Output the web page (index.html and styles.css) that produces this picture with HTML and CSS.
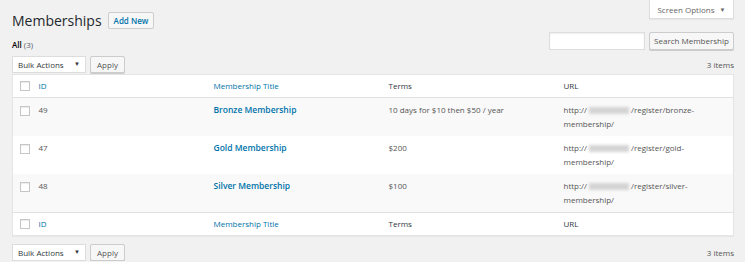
FILE: index.html
```html
<!DOCTYPE html>
<html lang="en">
<head>
  <meta charset="UTF-8">
  <title>Memberships</title>
  <meta name="viewport" content="width=device-width, initial-scale=1.0">
  <link rel="stylesheet" href="styles.css">
</head>
<body>

  <div class="wrap">
    <div class="page-head">
      <h1>Memberships</h1>
      <a class="page-title-action" href="#">Add New</a>
      <button class="screen-options" type="button">Screen Options <span class="arrow">&#9660;</span></button>
    </div>

    <div class="filter-row">
      <div class="subsubsub"><b>All</b> <span class="count">(3)</span></div>
      <form class="search-box">
        <input type="search" aria-label="Search Membership">
        <button type="submit" class="button">Search Membership</button>
      </form>
    </div>

    <div class="tablenav">
      <div class="bulk">
        <div class="select">Bulk Actions <span class="arrow">&#9660;</span></div>
        <button class="button" type="button">Apply</button>
      </div>
      <div class="num-items">3 items</div>
    </div>

    <table class="list-table">
      <colgroup>
        <col class="c-cb">
        <col class="c-col">
        <col class="c-col">
        <col class="c-col">
        <col>
      </colgroup>
      <thead>
        <tr>
          <th class="cb"><span class="check"></span></th>
          <th class="sortable">ID</th>
          <th class="sortable">Membership Title</th>
          <th>Terms</th>
          <th>URL</th>
        </tr>
      </thead>
      <tbody>
        <tr class="alt">
          <td class="cb"><span class="check"></span></td>
          <td>49</td>
          <td><a class="row-title" href="#">Bronze Membership</a></td>
          <td>10 days for $10 then $50 / year</td>
          <td><span class="url-line">http://<span class="blur"></span>/register/bronze-</span><span class="url-line">membership/</span></td>
        </tr>
        <tr>
          <td class="cb"><span class="check"></span></td>
          <td>47</td>
          <td><a class="row-title" href="#">Gold Membership</a></td>
          <td>$200</td>
          <td><span class="url-line">http://<span class="blur"></span>/register/gold-</span><span class="url-line">membership/</span></td>
        </tr>
        <tr class="alt">
          <td class="cb"><span class="check"></span></td>
          <td>48</td>
          <td><a class="row-title" href="#">Silver Membership</a></td>
          <td>$100</td>
          <td><span class="url-line">http://<span class="blur"></span>/register/silver-</span><span class="url-line">membership/</span></td>
        </tr>
      </tbody>
      <tfoot>
        <tr>
          <th class="cb"><span class="check"></span></th>
          <th class="sortable">ID</th>
          <th class="sortable">Membership Title</th>
          <th>Terms</th>
          <th>URL</th>
        </tr>
      </tfoot>
    </table>

    <div class="tablenav bottom">
      <div class="bulk">
        <div class="select">Bulk Actions <span class="arrow">&#9660;</span></div>
        <button class="button" type="button">Apply</button>
      </div>
      <div class="num-items">3 items</div>
    </div>
  </div>

</body>
</html>
```

FILE: styles.css
```css
body {
  font-family: "Open Sans", "Noto Sans", sans-serif;
  font-size: 8px;
  line-height: 14px;
  color: #444;
  background-color: #f1f1f1;
  margin: 0;
  padding: 0;
}
.wrap {
  padding: 0 11px 0 12px;
}
.page-head {
  display: flex;
  align-items: flex-start;
  height: 29px;
}
h1 {
  margin: 12px 0 0;
  font-size: 14px;
  font-weight: 400;
  line-height: 17px;
  color: #23282d;
}
.page-title-action {
  margin: 12px 0 0 6px;
  height: 17px;
  box-sizing: border-box;
  padding: 0 5px;
  border: 1px solid #ccc;
  border-radius: 2px;
  background-color: #f7f7f7;
  color: #0073aa;
  font-size: 8px;
  font-weight: 600;
  line-height: 15px;
  text-decoration: none;
}
.screen-options {
  margin-left: auto;
  width: 85px;
  height: 19px;
  padding: 0;
  border: 1px solid #ddd;
  border-top: none;
  background-color: #fff;
  color: #666;
  font-family: inherit;
  font-size: 8px;
  box-shadow: 0 1px 1px rgba(0, 0, 0, 0.04);
}
.arrow {
  font-size: 6px;
  margin-left: 3px;
  vertical-align: 1px;
}
.filter-row {
  display: flex;
  justify-content: space-between;
  margin-top: 3px;
  height: 18px;
}
.subsubsub {
  padding-top: 8px;
  line-height: 10px;
  color: #646970;
}
.subsubsub b {
  color: #000;
  font-weight: 600;
}
.count {
  color: #555d66;
}
.search-box {
  display: flex;
  gap: 4px;
  margin: 0;
}
.search-box input {
  width: 96px;
  height: 18px;
  box-sizing: border-box;
  border: 1px solid #ddd;
  background: #fff;
  box-shadow: inset 0 1px 2px rgba(0, 0, 0, 0.07);
  margin: 0;
}
.button {
  height: 18px;
  box-sizing: border-box;
  padding: 0 6px;
  border: 1px solid #ccc;
  border-radius: 2px;
  background-color: #f7f7f7;
  box-shadow: 0 1px 0 #ccc;
  color: #555;
  font-family: inherit;
  font-size: 8px;
  line-height: 16px;
  white-space: nowrap;
}
.search-box .button {
  width: 85px;
  padding: 0;
}
.tablenav {
  display: flex;
  justify-content: space-between;
  align-items: center;
  margin-top: 6px;
  height: 17px;
}
.tablenav.bottom {
  margin-top: 8px;
}
.bulk {
  display: flex;
  gap: 4px;
}
.select {
  width: 74px;
  height: 17px;
  box-sizing: border-box;
  padding: 0 0 0 5px;
  border: 1px solid #ddd;
  background: #fff;
  color: #32373c;
  line-height: 15px;
  position: relative;
}
.select .arrow {
  position: absolute;
  right: 5px;
  top: 0;
  color: #32373c;
}
.bulk .button {
  height: 17px;
  width: 35px;
  padding: 0;
  line-height: 15px;
}
.num-items {
  color: #555;
}
.list-table {
  width: 100%;
  margin-top: 1px;
  border-collapse: collapse;
  table-layout: fixed;
  background-color: #fff;
  border: 1px solid #e5e5e5;
  box-shadow: 0 1px 1px rgba(0, 0, 0, 0.04);
}
.c-cb {
  width: 20px;
}
.c-col {
  width: 175px;
}
th, td {
  text-align: left;
  vertical-align: top;
  padding: 4px 6px;
  font-weight: 400;
}
th {
  color: #32373c;
}
td {
  padding: 5px 6px;
  height: 28px;
  color: #555;
}
thead th {
  border-bottom: 1px solid #e1e1e1;
}
tfoot th {
  border-top: 1px solid #e1e1e1;
}
th.sortable {
  color: #0073aa;
}
.alt td {
  background-color: #f9f9f9;
}
.cb {
  padding: 6px 0 0 7px;
}
td.cb {
  padding-top: 8px;
}
.check {
  display: block;
  width: 10px;
  height: 10px;
  box-sizing: border-box;
  border: 1px solid #c6c6c6;
  background: #fff;
  box-shadow: inset 0 1px 1px rgba(0, 0, 0, 0.08);
}
.row-title {
  color: #0073aa;
  font-weight: 600;
  font-size: 8.5px;
  text-decoration: none;
}
.url-line {
  display: block;
  white-space: nowrap;
}
.blur {
  display: inline-block;
  width: 40px;
  height: 7px;
  margin: 0 2px;
  background-color: #d4d4d4;
  filter: blur(1.5px);
  vertical-align: -1px;
}
```
